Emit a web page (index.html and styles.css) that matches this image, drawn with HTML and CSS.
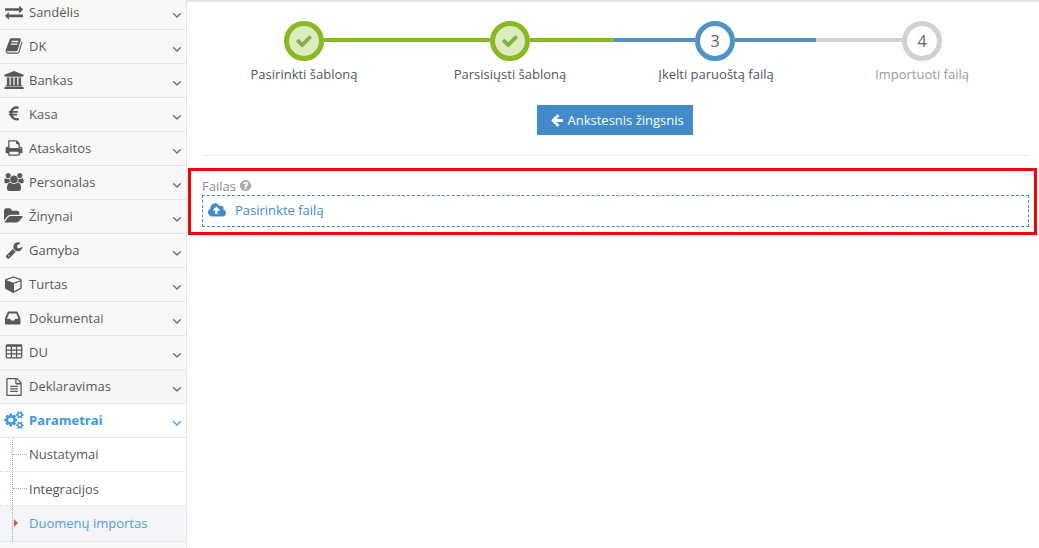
FILE: index.html
```html
<!DOCTYPE html>
<html lang="lt">
<head>
<meta charset="utf-8">
<title>Duomenų importas</title>
<link rel="stylesheet" href="styles.css">
</head>
<body>
<svg class="sprite" aria-hidden="true">
<symbol id="i-exchange" viewBox="-100 -100 1991 1991"><path d="M1792 1184v192q0 13-9.5 22.5t-22.5 9.5h-1376v192q0 13-9.5 22.5t-22.5 9.5q-12 0-24-10l-319-320q-9-9-9-22 0-14 9-23l320-320q9-9 23-9 13 0 22.5 9.5t9.5 22.5v192h1376q13 0 22.5 9.5t9.5 22.5zm0-544q0 14-9 23l-320 320q-9 9-23 9-13 0-22.5-9.5t-9.5-22.5v-192h-1376q-13 0-22.5-9.5t-9.5-22.5v-192q0-13 9.5-22.5t22.5-9.5h1376v-192q0-14 9-23t23-9q12 0 24 10l319 319q9 9 9 23z"/></symbol>
<symbol id="i-book" viewBox="-100 -100 1991 1991"><path d="M1703 478q40 57 18 129l-275 906q-19 64-76.5 107.5t-122.5 43.5h-923q-77 0-148.5-53.5t-99.5-131.5q-24-67-2-127 0-4 3-27t4-37q1-8-3-21.5t-3-19.5q2-11 8-21t16.5-23.5 16.5-23.5q23-38 45-91.5t30-91.5q3-10 .5-30t-.5-28q3-11 17-28t17-23q21-36 42-92t25-90q1-9-2.5-32t.5-28q4-13 22-30.5t22-22.5q19-26 42.5-84.5t27.5-96.5q1-8-3-25.5t-2-26.5q2-8 9-18t18-23 17-21q8-12 16.5-30.5t15-35 16-36 19.5-32 26.5-23.5 36-11.5 47.5 5.5l-1 3q38-9 51-9h761q74 0 114 56t18 130l-274 906q-36 119-71.5 153.5t-128.5 34.5h-869q-27 0-38 15-11 16-1 43 24 70 144 70h923q29 0 56-15.5t35-41.5l300-987q7-22 5-57 38 15 59 43zm-1064 2q-4 13 2 22.5t20 9.5h608q13 0 25.5-9.5t16.5-22.5l21-64q4-13-2-22.5t-20-9.5h-608q-13 0-25.5 9.5t-16.5 22.5zm-83 256q-4 13 2 22.5t20 9.5h608q13 0 25.5-9.5t16.5-22.5l21-64q4-13-2-22.5t-20-9.5h-608q-13 0-25.5 9.5t-16.5 22.5z"/></symbol>
<symbol id="i-bank" viewBox="-35 -100 1991 1991"><path d="M960 0l960 384v128h-128q0 26-20.5 45t-48.5 19h-1526q-28 0-48.5-19t-20.5-45h-128v-128zm-704 640h256v768h128v-768h256v768h128v-768h256v768h128v-768h256v768h59q28 0 48.5 19t20.5 45v64h-1664v-64q0-26 20.5-45t48.5-19h59v-768zm1595 960q28 0 48.5 19t20.5 45v128h-1920v-128q0-26 20.5-45t48.5-19h1782z"/></symbol>
<symbol id="i-euro" viewBox="-100 -100 1991 1991"><path d="M1360 1307l35 159q3 12-3 22.5t-17 14.5l-5 1q-4 2-10.5 3.5t-16 4.5-21.5 5.5-25.5 5-30 5-33.5 4.5-36.5 3-38.5 1q-234 0-409-130.5t-238-351.5h-95q-13 0-22.5-9.5t-9.5-22.5v-113q0-13 9.5-22.5t22.5-9.5h66q-2-57 1-105h-67q-14 0-23-9t-9-23v-114q0-14 9-23t23-9h98q67-210 243.5-338t400.5-128q102 0 194 23 11 3 20 15 6 11 3 24l-43 159q-3 13-14 19.5t-24 2.5l-4-1q-4-1-11.5-2.5l-17.5-3.5-22.5-3.5-26-3-29-2.5-29.5-1q-126 0-226 64t-150 176h468q16 0 25 12 10 12 7 26l-24 114q-5 26-32 26h-488q-3 47 0 105h459q15 0 25 12 9 12 6 27l-24 112q-2 11-11 18.5t-20 7.5h-387q48 117 149.5 185.5t228.5 68.5q18 0 36-1.5t33.5-3.5 29.5-4.5 24.5-5 18.5-4.5l12-3 5-2q13-5 26 2 12 7 15 21z"/></symbol>
<symbol id="i-print" viewBox="-100 -100 1991 1991"><path d="M448 1536h896v-256h-896v256zm0-640h896v-384h-160q-40 0-68-28t-28-68v-160h-640v640zm1152 64q0-26-19-45t-45-19-45 19-19 45 19 45 45 19 45-19 19-45zm128 0v416q0 13-9.5 22.5t-22.5 9.5h-224v160q0 40-28 68t-68 28h-960q-40 0-68-28t-28-68v-160h-224q-13 0-22.5-9.5t-9.5-22.5v-416q0-79 56.5-135.5t135.5-56.5h64v-544q0-40 28-68t68-28h672q40 0 88 20t76 48l152 152q28 28 48 76t20 88v256h64q79 0 135.5 56.5t56.5 135.5z"/></symbol>
<symbol id="i-group" viewBox="-35 -100 1991 1991"><path d="M593 896q-162 5-265 128h-134q-82 0-138-40.5t-56-118.5q0-353 124-353 6 0 43.5 21t97.5 42.5 119 21.5q67 0 133-23-5 37-5 66 0 139 81 256zm1071 637q0 120-73 189.5t-194 69.5h-874q-121 0-194-69.5t-73-189.5q0-53 3.5-103.5t14-109 26.5-108.5 43-97.5 62-81 85.5-53.5 111.5-20q10 0 43 21.5t73 48 107 48 135 21.5 135-21.5 107-48 73-48 43-21.5q61 0 111.5 20t85.5 53.5 62 81 43 97.5 26.5 108.5 14 109 3.5 103.5zm-1024-1277q0 106-75 181t-181 75-181-75-75-181 75-181 181-75 181 75 75 181zm704 384q0 159-112.5 271.5t-271.5 112.5-271.5-112.5-112.5-271.5 112.5-271.5 271.5-112.5 271.5 112.5 112.5 271.5zm576 225q0 78-56 118.5t-138 40.5h-134q-103-123-265-128 81-117 81-256 0-29-5-66 66 23 133 23 59 0 119-21.5t97.5-42.5 43.5-21q124 0 124 353zm-128-609q0 106-75 181t-181 75-181-75-75-181 75-181 181-75 181 75 75 181z"/></symbol>
<symbol id="i-folder" viewBox="-55 -100 1991 1991"><path d="M1815 952q0 31-31 66l-336 396q-43 51-120.5 86.5t-143.5 35.5h-1088q-34 0-60.5-13t-26.5-43q0-31 31-66l336-396q43-51 120.5-86.5t143.5-35.5h1088q34 0 60.5 13t26.5 43zm-343-344v160h-832q-94 0-197 47.5t-164 119.5l-337 396-5 6q0-4-.5-12.5t-.5-12.5v-960q0-92 66-158t158-66h320q92 0 158 66t66 158v32h544q92 0 158 66t66 158z"/></symbol>
<symbol id="i-wrench" viewBox="-100 -100 1991 1991"><path d="M448 1472q0-26-19-45t-45-19-45 19-19 45 19 45 45 19 45-19 19-45zm644-420l-682 682q-37 37-90 37-52 0-91-37l-106-108q-38-36-38-90 0-53 38-91l681-681q39 98 114.5 173.5t173.5 114.5zm634-435q0 39-23 106-47 134-164.5 217.5t-258.5 83.5q-185 0-316.5-131.5t-131.5-316.5 131.5-316.5 316.5-131.5q58 0 121.5 16.5t107.5 46.5q16 11 16 28t-16 28l-293 169v224l193 107q5-3 79-48.5t135.5-81 70.5-35.5q15 0 23.5 10t8.5 25z"/></symbol>
<symbol id="i-cube" viewBox="-100 -100 1991 1991"><path d="M896 1629l640-349v-636l-640 233v752zm-64-864l698-254-698-254-698 254zm832-252v768q0 35-18 65t-49 47l-704 384q-28 16-61 16t-61-16l-704-384q-31-17-49-47t-18-65v-768q0-40 23-73t61-47l704-256q22-8 44-8t44 8l704 256q38 14 61 47t23 73z"/></symbol>
<symbol id="i-inbox" viewBox="-100 -100 1991 1991"><path d="M1023 960h316q-1-3-2.5-8.5t-2.5-7.5l-212-496h-708l-212 496q-1 3-2.5 8.5t-2.5 7.5h316l95 192h320zm513 30v482q0 26-19 45t-45 19h-1408q-26 0-45-19t-19-45v-482q0-62 25-123l238-552q10-25 36.5-42t52.5-17h832q26 0 52.5 17t36.5 42l238 552q25 61 25 123z"/></symbol>
<symbol id="i-table" viewBox="-100 -100 1991 1991"><path d="M576 1376v-192q0-14-9-23t-23-9h-320q-14 0-23 9t-9 23v192q0 14 9 23t23 9h320q14 0 23-9t9-23zm0-384v-192q0-14-9-23t-23-9h-320q-14 0-23 9t-9 23v192q0 14 9 23t23 9h320q14 0 23-9t9-23zm512 384v-192q0-14-9-23t-23-9h-320q-14 0-23 9t-9 23v192q0 14 9 23t23 9h320q14 0 23-9t9-23zm-512-768v-192q0-14-9-23t-23-9h-320q-14 0-23 9t-9 23v192q0 14 9 23t23 9h320q14 0 23-9t9-23zm512 384v-192q0-14-9-23t-23-9h-320q-14 0-23 9t-9 23v192q0 14 9 23t23 9h320q14 0 23-9t9-23zm512 384v-192q0-14-9-23t-23-9h-320q-14 0-23 9t-9 23v192q0 14 9 23t23 9h320q14 0 23-9t9-23zm-512-768v-192q0-14-9-23t-23-9h-320q-14 0-23 9t-9 23v192q0 14 9 23t23 9h320q14 0 23-9t9-23zm512 384v-192q0-14-9-23t-23-9h-320q-14 0-23 9t-9 23v192q0 14 9 23t23 9h320q14 0 23-9t9-23zm0-384v-192q0-14-9-23t-23-9h-320q-14 0-23 9t-9 23v192q0 14 9 23t23 9h320q14 0 23-9t9-23zm128-320v1088q0 66-47 113t-113 47h-1344q-66 0-113-47t-47-113v-1088q0-66 47-113t113-47h1344q66 0 113 47t47 113z"/></symbol>
<symbol id="i-file" viewBox="-100 -100 1991 1991"><path d="M1596 476q28 28 48 76t20 88v1152q0 40-28 68t-68 28h-1344q-40 0-68-28t-28-68v-1600q0-40 28-68t68-28h896q40 0 88 20t76 48zm-444-244v376h376q-10-29-22-41l-313-313q-12-12-41-22zm384 1528v-1024h-416q-40 0-68-28t-28-68v-416h-768v1536h1280zm-1024-864q0-14 9-23t23-9h704q14 0 23 9t9 23v64q0 14-9 23t-23 9h-704q-14 0-23-9t-9-23v-64zm736 224q14 0 23 9t9 23v64q0 14-9 23t-23 9h-704q-14 0-23-9t-9-23v-64q0-14 9-23t23-9h704zm0 256q14 0 23 9t9 23v64q0 14-9 23t-23 9h-704q-14 0-23-9t-9-23v-64q0-14 9-23t23-9h704z"/></symbol>
<symbol id="i-cogs" viewBox="-35 -100 1991 1991"><path d="M896 896q0-106-75-181t-181-75-181 75-75 181 75 181 181 75 181-75 75-181zm768 512q0-52-38-90t-90-38-90 38-38 90q0 53 37.5 90.5t90.5 37.5 90.5-37.5 37.5-90.5zm0-1024q0-52-38-90t-90-38-90 38-38 90q0 53 37.5 90.5t90.5 37.5 90.5-37.5 37.5-90.5zm-384 421v185q0 10-7 19.5t-16 10.5l-155 24q-11 35-32 76 34 48 90 115 7 11 7 20 0 12-7 19-23 30-82.5 89.5t-78.5 59.5q-11 0-21-7l-115-90q-37 19-77 31-11 108-23 155-7 24-30 24h-186q-11 0-20-7.5t-10-17.5l-23-153q-34-10-75-31l-118 89q-7 7-20 7-11 0-21-8-144-133-144-160 0-9 7-19 10-14 41-53t47-61q-23-44-35-82l-152-24q-10-1-17-9.5t-7-19.5v-185q0-10 7-19.5t16-10.5l155-24q11-35 32-76-34-48-90-115-7-11-7-20 0-12 7-20 22-30 82-89t79-59q11 0 21 7l115 90q34-18 77-32 11-108 23-154 7-24 30-24h186q11 0 20 7.5t10 17.5l23 153q34 10 75 31l118-89q8-7 20-7 11 0 21 8 144 133 144 160 0 8-7 19-12 16-42 54t-45 60q23 48 34 82l152 23q10 2 17 10.5t7 19.5zm640 533v140q0 16-149 31-12 27-30 52 51 113 51 138 0 4-4 7-122 71-124 71-8 0-46-47t-52-68q-20 2-30 2t-30-2q-14 21-52 68t-46 47q-2 0-124-71-4-3-4-7 0-25 51-138-18-25-30-52-149-15-149-31v-140q0-16 149-31 13-29 30-52-51-113-51-138 0-4 4-7 4-2 35-20t59-34 30-16q8 0 46 46.5t52 67.5q20-2 30-2t30 2q51-71 92-112l6-2q4 0 124 70 4 3 4 7 0 25-51 138 17 23 30 52 149 15 149 31zm0-1024v140q0 16-149 31-12 27-30 52 51 113 51 138 0 4-4 7-122 71-124 71-8 0-46-47t-52-68q-20 2-30 2t-30-2q-14 21-52 68t-46 47q-2 0-124-71-4-3-4-7 0-25 51-138-18-25-30-52-149-15-149-31v-140q0-16 149-31 13-29 30-52-51-113-51-138 0-4 4-7 4-2 35-20t59-34 30-16q8 0 46 46.5t52 67.5q20-2 30-2t30 2q51-71 92-112l6-2q4 0 124 70 4 3 4 7 0 25-51 138 17 23 30 52 149 15 149 31z"/></symbol>
<symbol id="i-angle" viewBox="0 0 1792 1792"><path d="M1395 736q0 13-10 23l-466 466q-10 10-23 10t-23-10l-466-466q-10-10-10-23t10-23l50-50q10-10 23-10t23 10l393 393 393-393q10-10 23-10t23 10l50 50q10 10 10 23z"/></symbol>
<symbol id="i-check" viewBox="0 0 1792 1792"><path d="M1671 566q0 40-28 68l-724 724-136 136q-28 28-68 28t-68-28l-136-136-362-362q-28-28-28-68t28-68l136-136q28-28 68-28t68 28l294 295 656-657q28-28 68-28t68 28l136 136q28 28 28 68z"/></symbol>
<symbol id="i-left" viewBox="0 0 1792 1792"><path d="M1664 896v128q0 53-32.5 90.5t-84.5 37.5h-704l293 294q38 36 38 90t-38 90l-75 76q-37 37-90 37-52 0-91-37l-651-652q-37-37-37-90 0-52 37-91l651-650q38-38 91-38 52 0 90 38l75 74q38 38 38 91t-38 91l-293 293h704q52 0 84.5 37.5t32.5 90.5z"/></symbol>
<symbol id="i-cloud" viewBox="0 0 1920 1792"><path d="M1280 864q0-14-9-23l-352-352q-9-9-23-9t-23 9l-351 351q-10 12-10 24 0 14 9 23t23 9h224v352q0 13 9.5 22.5t22.5 9.5h192q13 0 22.5-9.5t9.5-22.5v-352h224q13 0 22.5-9.5t9.5-22.5zm640 288q0 159-112.5 271.5t-271.5 112.5h-1088q-185 0-316.5-131.5t-131.5-316.5q0-130 70-240t188-165q-2-30-2-43 0-212 150-362t362-150q156 0 285.5 87t188.5 231q71-62 166-62 106 0 181 75t75 181q0 76-41 138 130 31 213.5 135.5t83.5 238.5z"/></symbol>
<symbol id="i-help" viewBox="0 0 1792 1792"><path d="M1024 1376v-192q0-14-9-23t-23-9h-192q-14 0-23 9t-9 23v192q0 14 9 23t23 9h192q14 0 23-9t9-23zm256-672q0-88-55.5-163t-138.5-116-170-41q-243 0-371 213-15 24 8 42l132 100q7 6 19 6 16 0 25-12 53-68 86-92 34-24 86-24 48 0 85.5 26t37.5 59q0 38-20 61t-68 45q-63 28-115.5 86.5t-52.5 125.5v36q0 14 9 23t23 9h192q14 0 23-9t9-23q0-19 21.5-49.5t54.5-49.5q32-18 49-28.5t46-35 44.5-48 28-60.5 12.5-81zm384 192q0 209-103 385.5t-279.5 279.5-385.5 103-385.5-103-279.5-279.5-103-385.5 103-385.5 279.5-279.5 385.5-103 385.5 103 279.5 279.5 103 385.5z"/></symbol>
</svg>

<div class="app">
  <nav class="sidebar">
    <ul class="menu">
      <li class="item item-first"><svg class="ico"><use href="#i-exchange"/></svg><span class="label">Sandėlis</span><svg class="caret"><use href="#i-angle"/></svg></li>
      <li class="item"><svg class="ico"><use href="#i-book"/></svg><span class="label">DK</span><svg class="caret"><use href="#i-angle"/></svg></li>
      <li class="item"><svg class="ico"><use href="#i-bank"/></svg><span class="label">Bankas</span><svg class="caret"><use href="#i-angle"/></svg></li>
      <li class="item"><svg class="ico"><use href="#i-euro"/></svg><span class="label">Kasa</span><svg class="caret"><use href="#i-angle"/></svg></li>
      <li class="item"><svg class="ico"><use href="#i-print"/></svg><span class="label">Ataskaitos</span><svg class="caret"><use href="#i-angle"/></svg></li>
      <li class="item"><svg class="ico"><use href="#i-group"/></svg><span class="label">Personalas</span><svg class="caret"><use href="#i-angle"/></svg></li>
      <li class="item"><svg class="ico"><use href="#i-folder"/></svg><span class="label">Žinynai</span><svg class="caret"><use href="#i-angle"/></svg></li>
      <li class="item"><svg class="ico"><use href="#i-wrench"/></svg><span class="label">Gamyba</span><svg class="caret"><use href="#i-angle"/></svg></li>
      <li class="item"><svg class="ico"><use href="#i-cube"/></svg><span class="label">Turtas</span><svg class="caret"><use href="#i-angle"/></svg></li>
      <li class="item"><svg class="ico"><use href="#i-inbox"/></svg><span class="label">Dokumentai</span><svg class="caret"><use href="#i-angle"/></svg></li>
      <li class="item"><svg class="ico"><use href="#i-table"/></svg><span class="label">DU</span><svg class="caret"><use href="#i-angle"/></svg></li>
      <li class="item item-hover"><svg class="ico"><use href="#i-file"/></svg><span class="label">Deklaravimas</span><svg class="caret"><use href="#i-angle"/></svg></li>
      <li class="item item-open"><svg class="ico"><use href="#i-cogs"/></svg><span class="label">Parametrai</span><svg class="caret"><use href="#i-angle"/></svg></li>
    </ul>
    <ul class="submenu">
      <li class="sub">Nustatymai</li>
      <li class="sub">Integracijos</li>
      <li class="sub sub-current">Duomenų importas</li>
    </ul>
  </nav>

  <main class="content">
    <div class="track">
      <span class="dot dot-done"><svg class="check"><use href="#i-check"/></svg></span>
      <span class="seg seg-green seg-long"></span>
      <span class="dot dot-done"><svg class="check"><use href="#i-check"/></svg></span>
      <span class="seg seg-green seg-half"></span>
      <span class="seg seg-blue seg-half2"></span>
      <span class="dot dot-active">3</span>
      <span class="seg seg-blue seg-half3"></span>
      <span class="seg seg-grey"></span>
      <span class="dot dot-todo">4</span>
    </div>
    <div class="step-labels">
      <span class="step-label">Pasirinkti šabloną</span>
      <span class="step-label">Parsisiųsti šabloną</span>
      <span class="step-label">Įkelti paruoštą failą</span>
      <span class="step-label step-label-todo">Importuoti failą</span>
    </div>
    <div class="actions">
      <button class="btn" type="button"><svg class="btn-ico"><use href="#i-left"/></svg>Ankstesnis žingsnis</button>
    </div>
    <hr class="rule">
    <section class="upload">
      <div class="field-label">Failas<svg class="help"><use href="#i-help"/></svg></div>
      <div class="dropzone"><svg class="cloud"><use href="#i-cloud"/></svg><span>Pasirinkte failą</span></div>
    </section>
  </main>
</div>
</body>
</html>
```

FILE: styles.css
```css
* { box-sizing: border-box; }
html, body { margin: 0; height: 548px; overflow: hidden; background: #fff; }
body { font-family: "Open Sans", sans-serif; font-size: 13px; color: #585858; }
.sprite { display: none; }
.app { display: flex; height: 548px; }

.sidebar { width: 187px; flex: none; background: #f8f8f8; border-right: 1px solid #e5e5e5; }
.menu, .submenu { list-style: none; margin: 0; padding: 0; }

.item { display: flex; align-items: center; height: 34px; padding: 0 0 2px 4px; border-bottom: 1px solid #e5e5e5; background: #f8f8f8; color: #585858; }
.item-first { height: 30px; padding-bottom: 6px; }
.item-hover { background: #f6f6f6; }
.item-open { background: #fff; color: #3d9ade; font-weight: 700; }
.ico { width: 20px; height: 20px; flex: none; fill: currentColor; margin-right: 5px; }
.label { flex: 1; line-height: 18px; }
.caret { width: 14px; height: 14px; flex: none; fill: #666; margin: 6px 2px 0 0; stroke: #666; stroke-width: 50; }
.item-open .caret { fill: #3d9ade; stroke: #3d9ade; }

.submenu { position: relative; border-bottom: 1px solid #e5e5e5; background: #fff; }
.submenu::before { content: ""; position: absolute; left: 12px; top: 0; bottom: 0; border-left: 1px dotted #8fb3d0; z-index: 1; }
.sub { position: relative; height: 34px; padding-left: 29px; line-height: 33px; border-bottom: 1px dotted #d8d8d8; }
.sub:nth-child(2) { line-height: 35px; }
.sub:last-child { border-bottom: 0; height: 35px; line-height: 35px; }
.sub::before { content: ""; position: absolute; left: 13px; top: 16px; width: 14px; border-top: 1px dotted #8fb3d0; }
.sub-current { background: #f3f5f9; color: #4a9fde; }
.sub-current::before { left: 14px; top: 13px; width: 0; border-top: 4px solid transparent; border-bottom: 4px solid transparent; border-left: 4px solid #c86139; }

.content { flex: 1; min-width: 0; border-top: 2px solid #e5e5e5; display: flex; flex-direction: column; padding: 0 2px 0 1px; }

.track { display: flex; align-items: center; height: 40px; margin: 19px 96px 0 96px; }
.dot { width: 40px; height: 40px; flex: none; border-radius: 50%; border: 5px solid; display: flex; align-items: center; justify-content: center; background: #fff; font-size: 16px; color: #546474; }
.dot-done { border-color: #87ba21; background: #dcebc0; }
.dot-active { border-color: #4f92c6; }
.dot-todo { border-color: #ced1d6; }
.check { width: 18px; height: 18px; fill: #7fb53c; }
.seg { height: 4px; flex: none; margin-top: -3px; }
.seg-green { background: #87ba21; }
.seg-blue { background: #4f92c6; }
.seg-long { width: 166px; }
.seg-half { width: 84px; }
.seg-half2 { width: 81px; }
.seg-half3 { width: 81px; }
.seg-grey { background: #ced1d6; width: 86px; }

.step-labels { display: grid; grid-template-columns: repeat(4, 206px); margin: 4px 0 0 13px; }
.step-label { text-align: center; line-height: 18px; color: #4d5763; }
.step-label-todo { color: #999; }

.actions { display: flex; justify-content: center; margin-top: 22px; padding-left: 4px; }
.btn { display: flex; align-items: center; justify-content: flex-start; width: 156px; height: 30px; padding: 0 0 0 13px; border: 0; background: #428bca; color: #fff; font: 13px "Open Sans", sans-serif; }
.btn-ico { width: 14px; height: 14px; fill: #fff; margin-right: 4px; }

.rule { margin: 20px 8px 0 14px; border: 0; border-top: 1px solid #eaeaea; height: 0; }

.upload { margin-top: 12px; border: 3px solid #f00; padding: 6px 5px 5px 11px; height: 67px; }
.field-label { display: flex; align-items: center; height: 18px; padding-bottom: 1px; color: #8a8a8a; line-height: 16px; }
.help { width: 13px; height: 13px; fill: #a9a9a9; margin-left: 3px; }
.dropzone { display: flex; align-items: center; height: 32px; padding: 0 0 2px 5px; border: 1px dashed #428bca; color: #428bca; }
.cloud { width: 18px; height: 17px; fill: #428bca; margin-right: 9px; }
```
